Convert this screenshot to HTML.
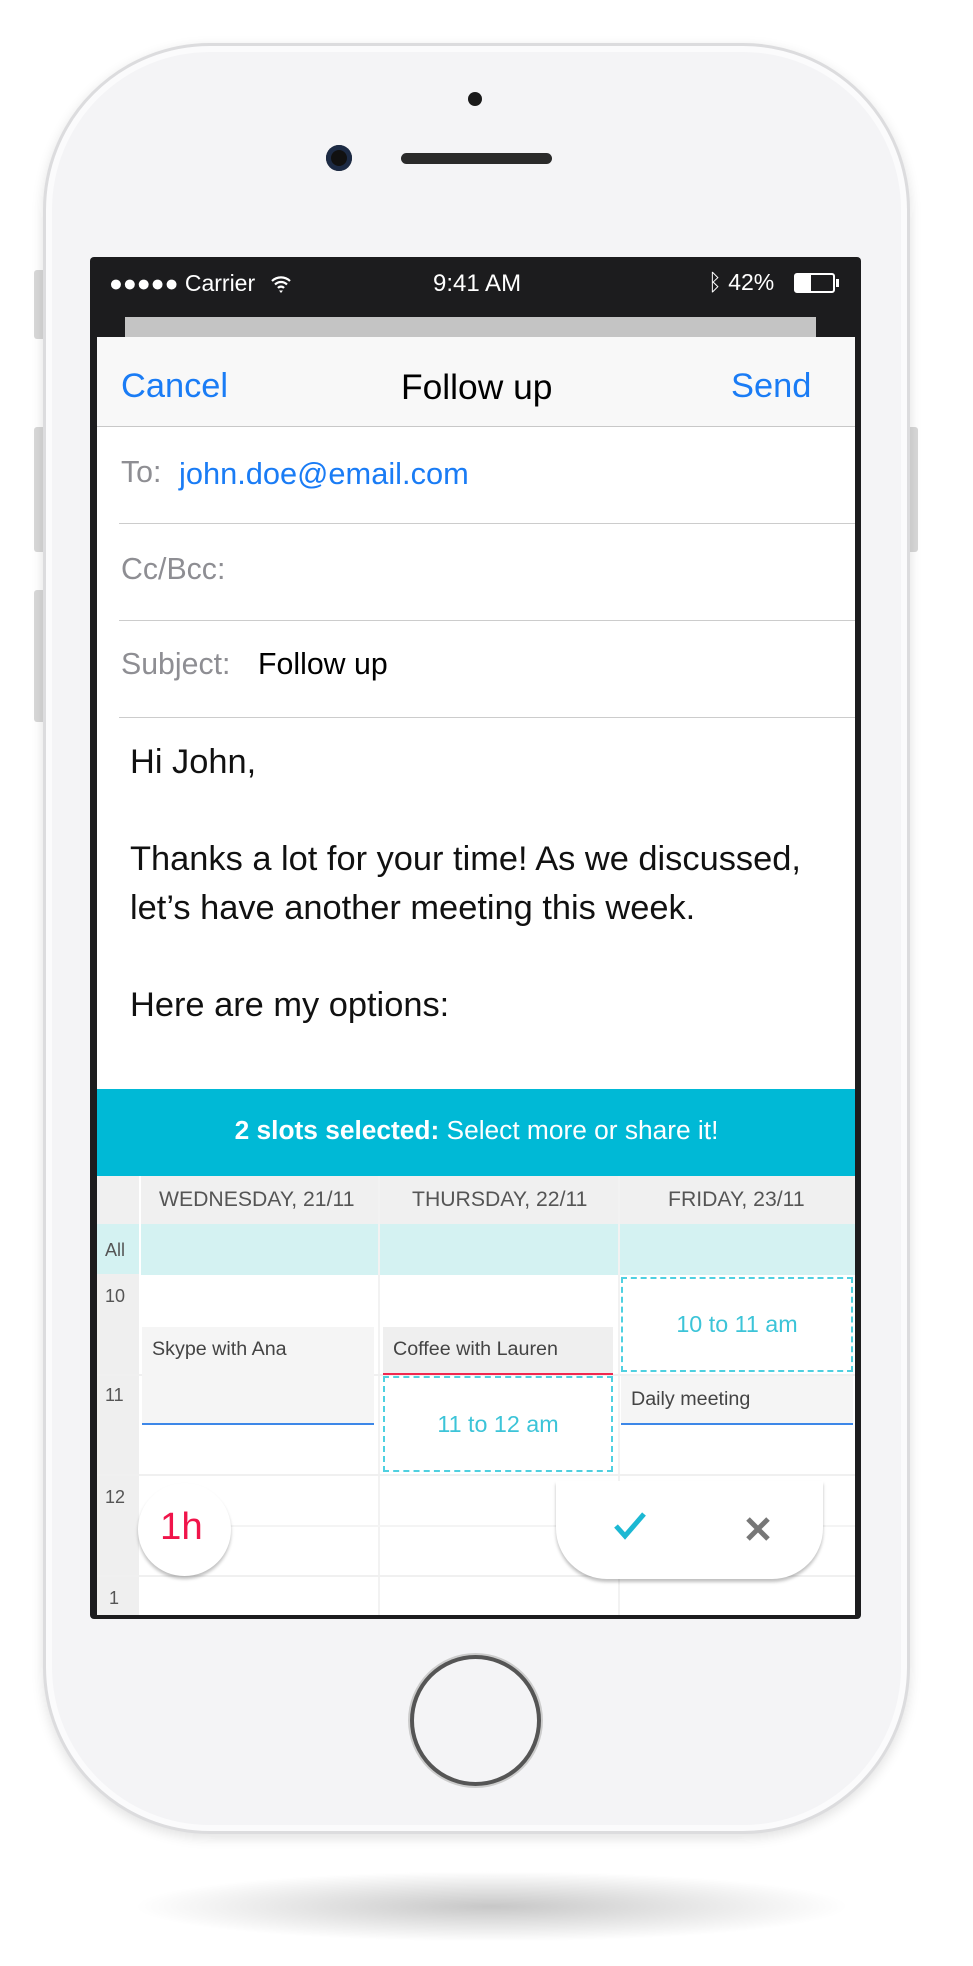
<!DOCTYPE html>
<html><head><meta charset="utf-8"><style>
*{margin:0;padding:0;box-sizing:border-box}
body{width:973px;height:1966px;background:#fff;position:relative;overflow:hidden;font-family:"Liberation Sans",sans-serif}
.a{position:absolute}
.t{position:absolute;white-space:nowrap}
</style></head><body>
<div class="a" style="left:131px;top:1871px;width:721px;height:71px;border-radius:50%;background:radial-gradient(ellipse at center,rgba(0,0,0,0.22),rgba(0,0,0,0) 70%)"></div>
<div class="a" style="left:34px;top:270px;width:12px;height:69px;background:#d8d8d8;border-radius:3px"></div>
<div class="a" style="left:34px;top:427px;width:12px;height:125px;background:#d8d8d8;border-radius:3px"></div>
<div class="a" style="left:34px;top:590px;width:12px;height:132px;background:#d8d8d8;border-radius:3px"></div>
<div class="a" style="left:906px;top:427px;width:12px;height:125px;background:#d8d8d8;border-radius:3px"></div>
<div class="a" style="left:43px;top:43px;width:867px;height:1791px;border-radius:167px;background:#f4f4f6;border:3px solid #dcdcde;box-shadow:inset 0 0 0 6px #fbfbfc,0 4px 12px rgba(0,0,0,0.12)"></div>
<div class="a" style="left:468px;top:92px;width:14px;height:14px;border-radius:50%;background:#1a1a1a"></div>
<div class="a" style="left:326px;top:145px;width:26px;height:26px;border-radius:50%;background:#111;box-shadow:inset 0 0 0 5px #1c2a44"></div>
<div class="a" style="left:401px;top:153px;width:151px;height:11px;border-radius:6px;background:#2a2a2a"></div>
<div class="a" style="left:410px;top:1655px;width:131px;height:131px;border-radius:50%;border:4px solid #555;background:#f4f4f6;box-shadow:0 0 0 2px #ccc"></div>
<div class="a" style="left:90px;top:257px;width:771px;height:1362px;background:#1c1c1e;border-radius:4px"></div>
<div class="t" style="left:109px;top:270px;color:#fff;font-size:23px">●●●●● Carrier</div>
<svg class="a" style="left:270px;top:274px" width="22" height="20" viewBox="0 0 22 20"><path d="M2 7a13 13 0 0 1 18 0M5 10.5a8.5 8.5 0 0 1 12 0M8 14a4 4 0 0 1 6 0" stroke="#fff" stroke-width="2.2" fill="none"/><path d="M9 16.5l2 2.5 2-2.5z" fill="#fff"/></svg>
<div class="t" style="left:433px;top:270px;color:#fff;font-size:24px">9:41 AM</div>
<div class="t" style="left:708px;top:269px;color:#fff;font-size:23px">ᛒ 42%</div>
<div class="a" style="left:794px;top:273px;width:41px;height:20px;border:2px solid #fff;border-radius:3px"><div style="width:15px;height:100%;background:#fff"></div></div>
<div class="a" style="left:836px;top:279px;width:3px;height:8px;background:#fff"></div>
<div class="a" style="left:125px;top:317px;width:691px;height:20px;background:#c4c4c4"></div>
<div class="a" style="left:97px;top:337px;width:758px;height:1278px;background:#fff"></div>
<div class="a" style="left:97px;top:337px;width:758px;height:90px;background:#f8f8f8;border-bottom:1px solid #c8c8c8"></div>
<div class="t" style="left:121px;top:367px;color:#1a7cf5;font-size:34.4px">Cancel</div>
<div class="t" style="left:401px;top:367px;color:#000;font-size:35.4px">Follow up</div>
<div class="t" style="left:731px;top:367px;color:#1a7cf5;font-size:34.4px">Send</div>
<div class="t" style="left:121px;top:456px;color:#8e8e93;font-size:30.3px">To:</div>
<div class="t" style="left:179px;top:456px;color:#1a7cf5;font-size:30.8px">john.doe@email.com</div>
<div class="a" style="left:119px;top:523px;width:736px;height:1px;background:#ccc"></div>
<div class="t" style="left:121px;top:553px;color:#8e8e93;font-size:30.3px">Cc/Bcc:</div>
<div class="a" style="left:119px;top:620px;width:736px;height:1px;background:#ccc"></div>
<div class="t" style="left:121px;top:648px;color:#8e8e93;font-size:30.3px">Subject:</div>
<div class="t" style="left:258px;top:648px;color:#000;font-size:30.3px">Follow up</div>
<div class="a" style="left:119px;top:717px;width:736px;height:1px;background:#ccc"></div>
<div class="a" style="left:130px;top:738px;color:#111;font-size:34.4px;line-height:48.5px">Hi John,<br><br>Thanks a lot for your time! As we discussed,<br>let’s have another meeting this week.<br><br>Here are my options:</div>
<div class="a" style="left:97px;top:1089px;width:758px;height:87px;background:#00b9d6"></div>
<div class="t" style="left:0;width:953px;text-align:center;top:1115px;color:#fff;font-size:26.3px"><b>2 slots selected:</b> Select more or share it!</div>
<div class="a" style="left:97px;top:1176px;width:758px;height:48px;background:#f0f0f0"></div>
<div class="a" style="left:97px;top:1224px;width:758px;height:51px;background:#d4f2f2"></div>
<div class="a" style="left:97px;top:1274px;width:42px;height:341px;background:#efefef"></div>
<div class="a" style="left:139px;top:1176px;width:2px;height:439px;background:#fff"></div>
<div class="a" style="left:378px;top:1176px;width:2px;height:439px;background:#f2f2f2"></div>
<div class="a" style="left:618px;top:1176px;width:2px;height:439px;background:#f2f2f2"></div>
<div class="a" style="left:97px;top:1374px;width:758px;height:2px;background:#f0f0f0"></div>
<div class="a" style="left:97px;top:1474px;width:758px;height:2px;background:#f0f0f0"></div>
<div class="a" style="left:97px;top:1575px;width:758px;height:2px;background:#f0f0f0"></div>
<div class="a" style="left:139px;top:1525px;width:716px;height:2px;background:#f4f4f4"></div>
<div class="t" style="left:159px;top:1188px;color:#555;font-size:21.2px">WEDNESDAY, 21/11</div>
<div class="t" style="left:412px;top:1188px;color:#555;font-size:21.2px">THURSDAY, 22/11</div>
<div class="t" style="left:668px;top:1188px;color:#555;font-size:21.2px">FRIDAY, 23/11</div>
<div class="t" style="left:105px;top:1240px;color:#555;font-size:18px">All</div>
<div class="t" style="left:105px;top:1286px;color:#555;font-size:18px">10</div>
<div class="t" style="left:105px;top:1385px;color:#555;font-size:18px">11</div>
<div class="t" style="left:105px;top:1487px;color:#555;font-size:18px">12</div>
<div class="t" style="left:109px;top:1588px;color:#555;font-size:18px">1</div>
<div class="a" style="left:142px;top:1327px;width:232px;height:98px;background:#f5f5f5;border-bottom:2px solid #3d87e8"></div>
<div class="t" style="left:152px;top:1338px;color:#444;font-size:19.7px">Skype with Ana</div>
<div class="a" style="left:383px;top:1327px;width:230px;height:48px;background:#efefef;border-bottom:2px solid #f0284f"></div>
<div class="t" style="left:393px;top:1338px;color:#444;font-size:19.7px">Coffee with Lauren</div>
<div class="a" style="left:621px;top:1376px;width:232px;height:49px;background:#f5f5f5;border-bottom:2px solid #3d87e8"></div>
<div class="t" style="left:631px;top:1388px;color:#444;font-size:19.7px">Daily meeting</div>
<div class="a" style="left:621px;top:1277px;width:232px;height:95px;border:2px dashed #4fd0e0;color:#3cc4d8;font-size:23.3px;text-align:center;line-height:91px">10 to 11 am</div>
<div class="a" style="left:383px;top:1376px;width:230px;height:96px;border:2px dashed #4fd0e0;color:#3cc4d8;font-size:23.3px;text-align:center;line-height:92px">11 to 12 am</div>
<div class="a" style="left:138px;top:1483px;width:93px;height:93px;border-radius:50%;background:#fff;box-shadow:0 3px 3px rgba(0,0,0,0.25)"></div>
<div class="t" style="left:160px;top:1505px;color:#f0144a;font-size:38.4px">1h</div>
<div class="a" style="left:556px;top:1481px;width:267px;height:98px;background:#fff;border-radius:0 0 51px 51px;box-shadow:0 3px 3px rgba(0,0,0,0.25)"></div>
<svg class="a" style="left:613px;top:1511px" width="34" height="30" viewBox="0 0 34 30"><path d="M3 15l9 10L31 3" stroke="#1cb8d3" stroke-width="5" fill="none"/></svg>
<svg class="a" style="left:745px;top:1516px" width="26" height="26" viewBox="0 0 26 26"><path d="M3 3l20 20M23 3L3 23" stroke="#777" stroke-width="5"/></svg>
</body></html>
